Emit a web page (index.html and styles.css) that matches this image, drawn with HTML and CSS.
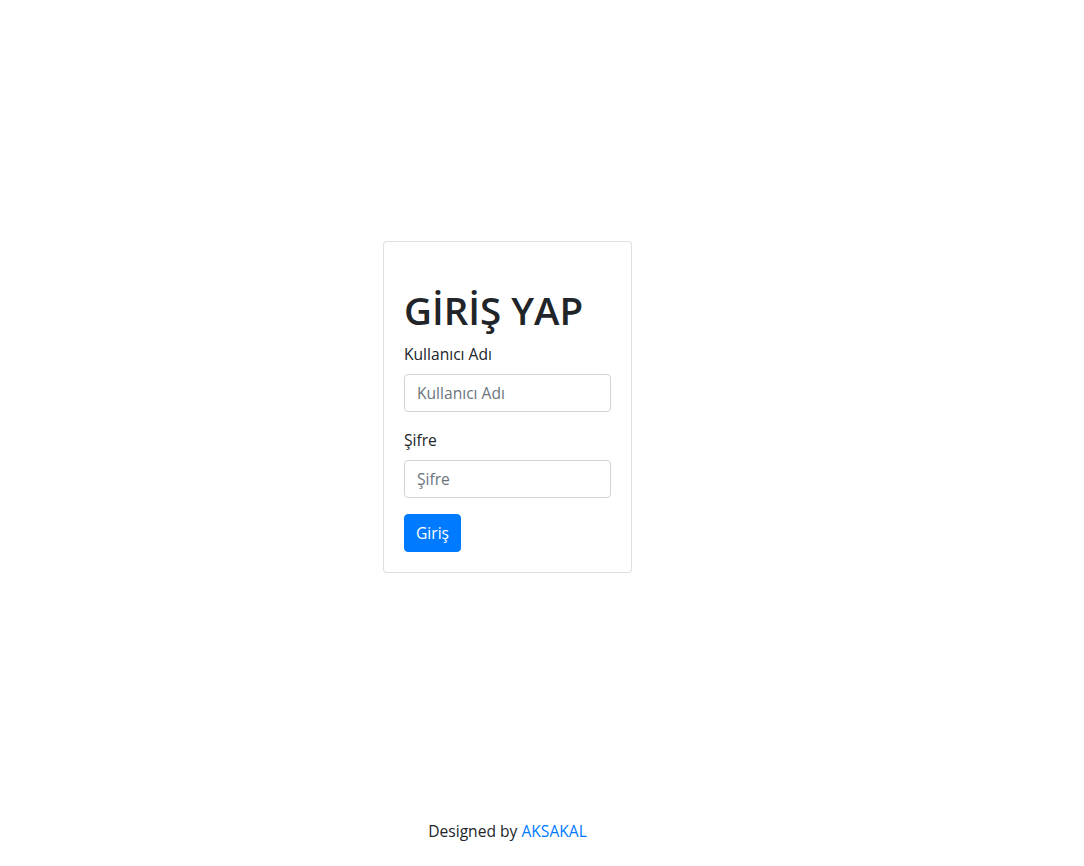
FILE: index.html
```html
<!DOCTYPE html>
<html lang="tr">
<head>
    <meta charset="UTF-8">
    <meta name="viewport" content="width=device-width, initial-scale=1.0">
    <title>Giriş Yap</title>
    <link rel="stylesheet" href="styles.css">
</head>
<body>
    <div class="page">
        <main class="main">
            <div class="card">
                <form class="card-body">
                    <h1>GİRİŞ YAP</h1>
                    <div class="form-group">
                        <label for="username">Kullanıcı Adı</label>
                        <input type="text" id="username" class="form-control" placeholder="Kullanıcı Adı">
                    </div>
                    <div class="form-group">
                        <label for="password">Şifre</label>
                        <input type="password" id="password" class="form-control" placeholder="Şifre">
                    </div>
                    <button type="button" class="btn">Giriş</button>
                </form>
            </div>
        </main>
        <footer class="footer">Designed by <a href="#">AKSAKAL</a></footer>
    </div>
</body>
</html>
```

FILE: styles.css
```css
* { box-sizing: border-box; }
body { margin: 0; font-family: "Open Sans", "Noto Sans", Arial, sans-serif; font-size: 15.6px; line-height: 24px; color: #212529; background: #fff; }
.page { width: 1015px; min-height: 100vh; display: flex; flex-direction: column; }
.main { padding-top: 241px; display: flex; justify-content: center; }
.card { width: 249px; border: 1px solid rgba(0, 0, 0, .125); border-radius: 4px; background: #fff; }
.card-body { padding: 20px; }
h1 { margin: 24px 0 8px; font-size: 38.5px; font-weight: 600; line-height: 48px; }
.form-group { margin-bottom: 16px; }
label { display: inline-block; margin-bottom: 8px; }
.form-control { display: block; width: 100%; height: 38px; padding: 6px 12px; font: inherit; color: #495057; border: 1px solid #ced4da; border-radius: 4px; }
.form-control::placeholder { color: #6c757d; }
.btn { height: 38px; padding: 6px 11px; font: inherit; color: #fff; background: #007bff; border: 1px solid #007bff; border-radius: 4px; }
.footer { margin-top: auto; padding-bottom: 23px; text-align: center; }
.footer a { color: #007bff; text-decoration: none; }
```
